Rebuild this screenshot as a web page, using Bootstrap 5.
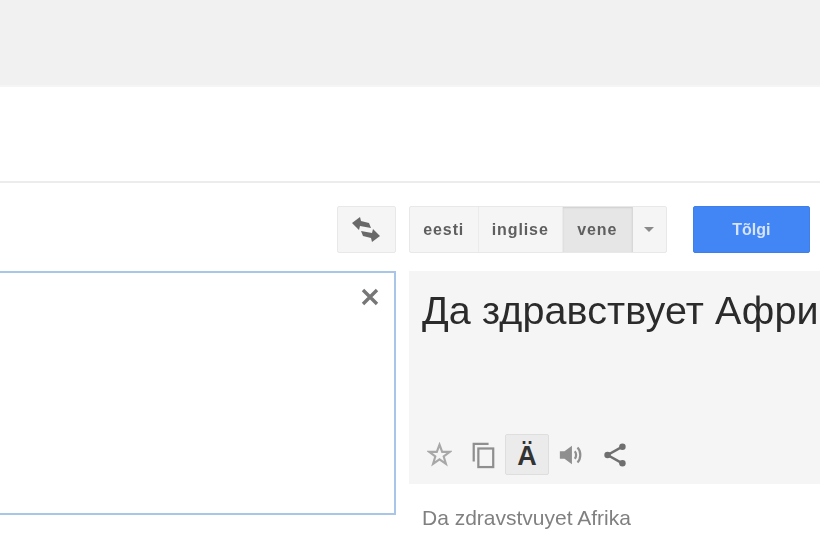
<!DOCTYPE html>
<html lang="et">
<head>
    <meta charset="UTF-8">
    <title>Google Tõlge</title>
    <link href="https://cdn.jsdelivr.net/npm/bootstrap@5.3.0/dist/css/bootstrap.min.css" rel="stylesheet">
    <style>
        html, body { height: 100%; overflow: hidden; }
        body { font-family: "Liberation Sans", Arial, sans-serif; color: #222; background: #fff; }
        .page-wrap { filter: blur(.7px); }
        .top-strip { height: 87px; background: #f1f1f1; border-bottom: 2px solid #f5f5f5; }
        .sub-head { height: 96px; border-bottom: 2px solid #ececec; }
        .tool-row { height: 88px; padding: 23px 10px 0 337px; gap: 13px; }
        .gt-btn { height: 47px; background: #f5f5f5; border: 1px solid #e8e8e8; border-radius: 2px; color: #5f5f5f; font-size: 16px; font-weight: 700; }
        .swap-btn { width: 59px; }
        .lang-group { width: 259px; }
        .lang-item { height: 100%; border-right: 1px solid #ebebeb; letter-spacing: .9px; }
        .lang-et { width: 69px; }
        .lang-en { width: 84px; }
        .lang-ru { width: 70px; background: #e6e6e6; border-right-color: #d8d8d8; box-shadow: inset 0 1px 2px rgba(0,0,0,.1); }
        .lang-more { flex: 1; }
        .caret-down { width: 0; height: 0; border-left: 5px solid transparent; border-right: 5px solid transparent; border-top: 5px solid #8a8a8a; }
        .go-btn { width: 118px; height: 47px; margin-left: 13px; background: #4285f4; border: 1px solid #3f7fe8; border-radius: 2px; color: #d5e3fb; font-size: 16px; font-weight: 700; }
        .panes { gap: 13px; }
        .src-pane { width: 396px; height: 244px; background: #fff; border: 2px solid #a9c6e8; border-left: 0; padding: 14px 14px 0 0; }
        .res-col { flex: 1; min-width: 0; }
        .res-pane { height: 213px; background: #f5f5f5; padding: 17px 0 0 13px; }
        .res-text { font-size: 39.5px; line-height: 44px; white-space: nowrap; color: #2b2b2b; letter-spacing: .1px; }
        .res-tools { margin-left: -5px; padding-bottom: 9px; }
        .tool-ico { width: 44px; height: 41px; flex: none; }
        .tool-on { width: 44px; background: #ebebeb; border: 1px solid #dedede; border-radius: 2px; padding-top: 3px; font-size: 27px; font-weight: 700; line-height: 1; color: #333; }
        .translit { font-size: 21px; color: #808080; padding: 21px 0 0 13px; line-height: 26px; white-space: nowrap; }
    </style>
</head>
<body>
    <div class="page-wrap">
    <div class="top-strip"></div>
    <div class="sub-head"></div>

    <div class="tool-row d-flex align-items-start">
        <button type="button" class="gt-btn swap-btn d-flex align-items-center justify-content-center p-0">
            <svg width="30" height="25" viewBox="0 0 30 25"><path d="M1 6l8-6 1 4 8 2 2 5-11-2-1 4z M29 19l-8 6-1-4-8-2-2-5 11 2 1-4z" fill="#696969"/></svg>
        </button>
        <div class="gt-btn lang-group d-flex align-items-center">
            <div class="lang-item lang-et d-flex align-items-center justify-content-center">eesti</div>
            <div class="lang-item lang-en d-flex align-items-center justify-content-center">inglise</div>
            <div class="lang-item lang-ru d-flex align-items-center justify-content-center">vene</div>
            <div class="lang-more d-flex align-items-center justify-content-center"><span class="caret-down"></span></div>
        </div>
        <button type="button" class="go-btn p-0">Tõlgi</button>
    </div>

    <div class="panes d-flex align-items-start">
        <div class="src-pane d-flex justify-content-end">
            <svg width="20" height="20" viewBox="0 0 20 20"><path d="M3 3l14 14M17 3L3 17" stroke="#777" stroke-width="3.4" fill="none"/></svg>
        </div>
        <div class="res-col">
            <div class="res-pane d-flex flex-column justify-content-between">
                <div class="res-text">Да здравствует Африка</div>
                <div class="res-tools d-flex align-items-center">
                    <span class="tool-ico d-flex align-items-center justify-content-center">
                        <svg width="25" height="25" viewBox="0 0 28 28"><path d="M14 3l3 8h8.500l-6.800 5.200 2.500 8.300L14 19.500l-7.200 5 2.500-8.300L2.500 11H11z" fill="none" stroke="#a8a8a8" stroke-width="2.400"/></svg>
                    </span>
                    <span class="tool-ico d-flex align-items-center justify-content-center">
                        <svg width="26" height="28" viewBox="0 0 28 30"><path d="M4 22V3h16" fill="none" stroke="#8f8f8f" stroke-width="2.400"/><rect x="9" y="8" width="16" height="20" fill="none" stroke="#8f8f8f" stroke-width="2.400"/></svg>
                    </span>
                    <span class="tool-ico tool-on d-flex align-items-center justify-content-center">Ä</span>
                    <span class="tool-ico d-flex align-items-center justify-content-center">
                        <svg width="26" height="26" viewBox="0 0 28 28"><path d="M2 10h5l8-6v20l-8-6H2z" fill="#8f8f8f"/><path d="M18 10c2 2 2 6 0 8M21 6c4 4 4 12 0 16" fill="none" stroke="#8f8f8f" stroke-width="2.400"/></svg>
                    </span>
                    <span class="tool-ico d-flex align-items-center justify-content-center">
                        <svg width="26" height="26" viewBox="0 0 28 28"><path d="M22 5L6 14l16 9" fill="none" stroke="#6f6f6f" stroke-width="2.600"/><circle cx="22" cy="5" r="3.500" fill="#6f6f6f"/><circle cx="6" cy="14" r="3.500" fill="#6f6f6f"/><circle cx="22" cy="23" r="3.500" fill="#6f6f6f"/></svg>
                    </span>
                </div>
            </div>
            <div class="translit">Da zdravstvuyet Afrika</div>
        </div>
    </div>
    </div>

    <script src="https://cdn.jsdelivr.net/npm/bootstrap@5.3.0/dist/js/bootstrap.bundle.min.js"></script>
</body>
</html>
